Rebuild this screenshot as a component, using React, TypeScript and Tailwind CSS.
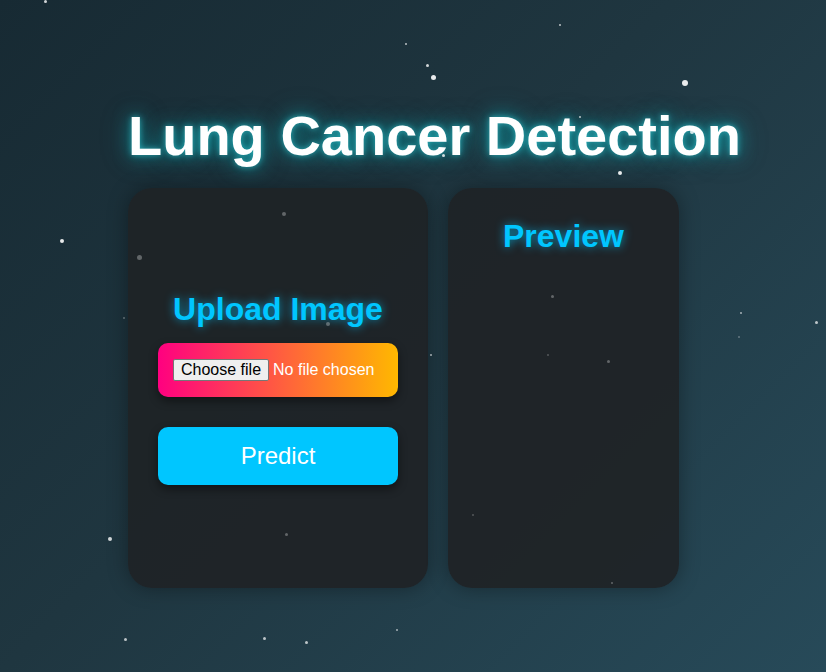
import React from "react";

const stars: [number, number, number, number][] = [
  [45, 1, 3, 0.8],
  [406, 44, 2, 0.7],
  [427, 65, 3, 0.8],
  [433, 77, 5, 0.9],
  [560, 25, 2, 0.7],
  [685, 83, 6, 0.9],
  [62, 241, 4, 0.9],
  [620, 173, 4, 0.9],
  [443, 155, 3, 0.8],
  [580, 117, 2, 0.7],
  [692, 132, 4, 0.8],
  [284, 214, 4, 0.5],
  [139, 257, 5, 0.5],
  [328, 324, 4, 0.5],
  [552, 296, 3, 0.5],
  [608, 361, 3, 0.5],
  [286, 534, 3, 0.5],
  [548, 355, 2, 0.4],
  [473, 515, 2, 0.4],
  [612, 583, 2, 0.5],
  [110, 539, 4, 0.8],
  [125, 639, 3, 0.7],
  [264, 638, 3, 0.7],
  [306, 642, 3, 0.7],
  [397, 630, 2, 0.6],
  [431, 355, 2, 0.6],
  [741, 313, 2, 0.6],
  [816, 322, 3, 0.7],
  [739, 337, 2, 0.5],
  [124, 318, 2, 0.5],
];

export default function App() {
  return (
    <div
      className="relative w-full min-h-[672px] h-[672px] overflow-hidden bg-[linear-gradient(135deg,#172a33_0%,#1f3640_45%,#274a59_100%)]"
      style={{ fontFamily: '"Liberation Sans", Arial, sans-serif' }}
    >
      <div className="relative z-10 flex flex-col items-start pl-[128px] pt-[104px]">
        <h1 className="text-[56px] leading-[64px] font-bold text-white [text-shadow:0_0_6px_rgba(60,230,240,0.6),0_0_18px_rgba(0,200,210,0.55),0_0_30px_rgba(0,170,180,0.35)]">
          Lung Cancer Detection
        </h1>
        <div className="mt-[20px] flex gap-[20px]">
          <div className="w-[300px] h-[400px] rounded-[24px] bg-[rgba(31,35,38,0.94)] shadow-[0_0_20px_rgba(0,0,0,0.35)] flex flex-col items-center justify-center">
            <h2 className="text-[32px] leading-[37px] font-bold text-[#00c6ff] [text-shadow:0_0_10px_rgba(0,198,255,0.7)]">
              Upload Image
            </h2>
            <label className="mt-[15px] w-[240px] h-[54px] rounded-[10px] bg-[linear-gradient(to_right,#ff0080,#ffb800)] shadow-[0_4px_10px_rgba(0,0,0,0.45)] flex items-center pl-[15px] cursor-pointer">
              <input type="file" className="hidden" />
              <span className="h-[22px] px-[7px] flex items-center bg-[#efefef] border border-[#767676] rounded-[2px] text-black text-[16px] leading-[20px]">
                Choose file
              </span>
              <span className="ml-[4px] text-white text-[16px] leading-[20px]">No file chosen</span>
            </label>
            <button className="mt-[30px] w-[240px] h-[58px] rounded-[10px] bg-[#00c6ff] text-white text-[24px] shadow-[0_4px_10px_rgba(0,0,0,0.45)]">
              Predict
            </button>
          </div>
          <div className="w-[231px] h-[400px] rounded-[24px] bg-[rgba(31,35,38,0.94)] shadow-[0_0_20px_rgba(0,0,0,0.35)] flex flex-col items-center pt-[30px]">
            <h2 className="text-[32px] leading-[37px] font-bold text-[#00c6ff] [text-shadow:0_0_10px_rgba(0,198,255,0.7)]">
              Preview
            </h2>
          </div>
        </div>
      </div>
      <div className="absolute inset-0 z-20 pointer-events-none">
        {stars.map(([x, y, s, o], i) => (
          <div
            key={i}
            className="absolute rounded-full bg-white"
            style={{ left: x - s / 2, top: y - s / 2, width: s, height: s, opacity: o * (o < 0.6 ? 0.6 : 1) }}
          />
        ))}
      </div>
    </div>
  );
}
